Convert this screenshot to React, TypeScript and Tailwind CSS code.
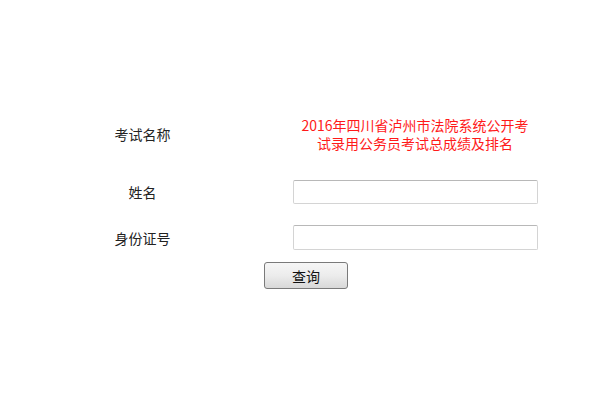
export default function App() {
  const font = { fontFamily: '"Noto Sans CJK SC", "Microsoft YaHei", sans-serif' };
  return (
    <div className="w-[600px] h-[400px] bg-white text-[14px] text-[#222]" style={font}>
      <div className="pt-[116px]">
        <div className="grid grid-cols-[285px_260px] items-center h-[36px]">
          <div className="text-center leading-[18px]">考试名称</div>
          <div className="text-center leading-[18px] text-[#ff1a1a]">
            <div>2016年四川省泸州市法院系统公开考</div>
            <div>试录用公务员考试总成绩及排名</div>
          </div>
        </div>
        <div className="grid grid-cols-[285px_260px] items-center mt-[28px] h-[24px]">
          <div className="text-center leading-[18px]">姓名</div>
          <div className="flex justify-center">
            <input className="w-[245px] h-[24px] border border-[#d4d4d4] border-t-[#b8b8b8] rounded-[2px] outline-none px-1" />
          </div>
        </div>
        <div className="grid grid-cols-[285px_260px] items-center mt-[21px] h-[25px]">
          <div className="text-center leading-[18px]">身份证号</div>
          <div className="flex justify-center">
            <input className="w-[245px] h-[25px] border border-[#d4d4d4] border-t-[#b8b8b8] rounded-[2px] outline-none px-1" />
          </div>
        </div>
        <div className="flex pl-[264px] mt-[12px]">
          <button className="w-[84px] h-[27px] border border-[#7a7a7a] rounded-[3px] bg-gradient-to-b from-[#f6f6f6] via-[#ececec] to-[#d8d8d8] text-[14px] leading-[18px] text-[#111]" style={font}>
            查询
          </button>
        </div>
      </div>
    </div>
  );
}
